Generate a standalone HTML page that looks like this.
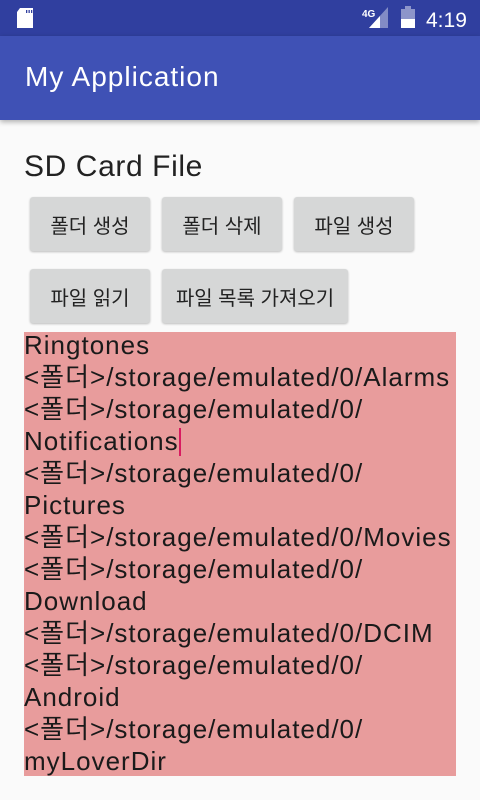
<!DOCTYPE html>
<html><head><meta charset="utf-8"><style>
body{margin:0;width:480px;height:800px;background:#fafafa;font-family:"Liberation Sans","Noto Sans CJK KR",sans-serif;position:relative;overflow:hidden}
.sb{position:absolute;top:0;left:0;width:480px;height:36px;background:#303f9f}
.ab{position:absolute;top:36px;left:0;width:480px;height:84px;background:#3f51b5;box-shadow:0 2px 5px rgba(0,0,0,.3)}
.ab span{position:absolute;left:25px;top:25px;color:#fff;font-size:28px;letter-spacing:1px}
.h{position:absolute;left:24px;top:150px;font-size:30px;color:#222;letter-spacing:.6px}
.b{position:absolute;height:54px;background:#d6d7d7;border-radius:3px;box-shadow:0 1px 2px rgba(0,0,0,.25);font-size:20px;color:#222;display:flex;align-items:center;justify-content:center}
.t{position:absolute;left:24px;top:332px;width:432px;height:444px;background:#e89c9c;font-size:26px;line-height:32px;color:#1a1a1a;white-space:pre;letter-spacing:1px;overflow:hidden}
.t div{margin-top:-3px}
</style></head><body>
<div class="sb">
<svg width="480" height="36" style="position:absolute;left:0;top:0">
<path d="M20 8h13v20h-16v-16z" fill="#fff"/>
<rect x="26" y="10" width="1.3" height="3" fill="#303f9f"/><rect x="28.5" y="10" width="1.3" height="3" fill="#303f9f"/><rect x="31" y="10" width="1.3" height="3" fill="#303f9f"/>
<path d="M369 28l19-21v21z" fill="#fff" opacity=".4"/><path d="M369 28l11-12v12z" fill="#fff"/>
<text x="362" y="17" fill="#fff" font-size="10" font-weight="bold" font-family="Liberation Sans">4G</text>
<rect x="401" y="9" width="14" height="19" fill="#fff" opacity=".45"/><rect x="405" y="6" width="6" height="3" fill="#fff" opacity=".45"/><rect x="401" y="19" width="14" height="9" fill="#fff"/>
<text x="426" y="27" fill="#fff" font-size="21" font-family="Liberation Sans">4:19</text>
</svg></div>
<div class="ab"><span>My Application</span></div>
<div class="h">SD Card File</div>
<div class="b" style="left:30px;top:197px;width:120px">폴더 생성</div>
<div class="b" style="left:162px;top:197px;width:120px">폴더 삭제</div>
<div class="b" style="left:294px;top:197px;width:120px">파일 생성</div>
<div class="b" style="left:30px;top:269px;width:120px">파일 읽기</div>
<div class="b" style="left:162px;top:269px;width:186px">파일 목록 가져오기</div>
<div class="t"><div>Ringtones
&lt;폴더&gt;/storage/emulated/0/Alarms
&lt;폴더&gt;/storage/emulated/0/
Notifications<span style="display:inline-block;width:2px;height:28px;background:#d81b60;vertical-align:-6px"></span>
&lt;폴더&gt;/storage/emulated/0/
Pictures
&lt;폴더&gt;/storage/emulated/0/Movies
&lt;폴더&gt;/storage/emulated/0/
Download
&lt;폴더&gt;/storage/emulated/0/DCIM
&lt;폴더&gt;/storage/emulated/0/
Android
&lt;폴더&gt;/storage/emulated/0/
myLoverDir</div></div>
</body></html>
